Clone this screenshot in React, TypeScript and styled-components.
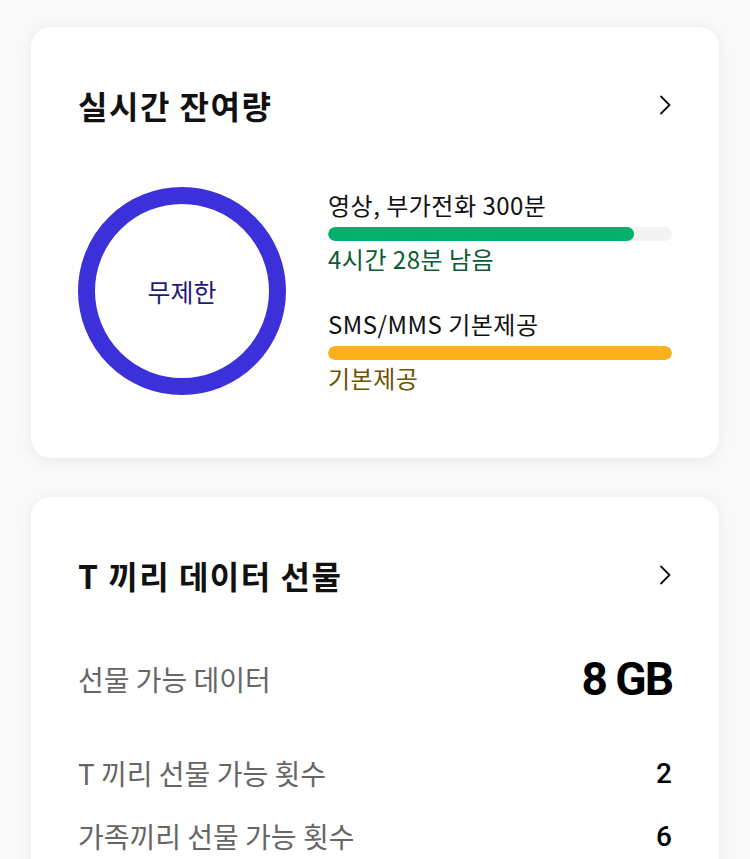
import styled, { createGlobalStyle } from 'styled-components';

const GlobalStyle = createGlobalStyle`
  html, body {
    margin: 0;
    padding: 0;
    background: #f9f9f9;
    font-family: 'Noto Sans CJK KR', 'Noto Sans', sans-serif;
  }
`;

const Chevron = () => (
  <svg width="24" height="24" viewBox="0 0 24 24" fill="none" stroke="#111" strokeWidth="1.8" strokeLinecap="round" strokeLinejoin="round">
    <path d="M7 3.5l8.5 8.5L7 20.5" />
  </svg>
);

const usage = [
  { label: '영상, 부가전화 300분', sub: '4시간 28분 남음', pct: 89, color: '#03b16a', subColor: '#0b5b33' },
  { label: 'SMS/MMS 기본제공', sub: '기본제공', pct: 100, color: '#fcb11c', subColor: '#6e5200' },
];

const gifts = [
  { label: 'T 끼리 선물 가능 횟수', value: '2' },
  { label: '가족끼리 선물 가능 횟수', value: '6' },
];

export default function App() {
  return (
    <>
      <GlobalStyle />
      <Page>
        <Card>
          <CardHeader>
            <CardTitle>실시간 잔여량</CardTitle>
            <Chevron />
          </CardHeader>
          <Remain>
            <Ring>무제한</Ring>
            <UsageList>
              {usage.map(u => (
                <UsageItem key={u.label}>
                  <UsageLabel>{u.label}</UsageLabel>
                  <Track>
                    <Fill $color={u.color} style={{ width: `${u.pct}%` }} />
                  </Track>
                  <UsageSub $color={u.subColor}>{u.sub}</UsageSub>
                </UsageItem>
              ))}
            </UsageList>
          </Remain>
        </Card>

        <Card>
          <CardHeader>
            <CardTitle>T 끼리 데이터 선물</CardTitle>
            <Chevron />
          </CardHeader>
          <BigRow>
            <RowLabel>선물 가능 데이터</RowLabel>
            <BigValue>8 GB</BigValue>
          </BigRow>
          <CountList>
            {gifts.map(g => (
              <CountRow key={g.label}>
                <RowLabel>{g.label}</RowLabel>
                <CountValue>{g.value}</CountValue>
              </CountRow>
            ))}
          </CountList>
        </Card>
      </Page>
    </>
  );
}

const Page = styled.div`
  display: flex;
  flex-direction: column;
  gap: 39px;
  padding: 27px 31px 40px;
`;

const Card = styled.div`
  background: #fff;
  border-radius: 20px;
  box-shadow: 0 2px 14px rgba(0, 0, 0, 0.07);
  padding: 57px 47px 63px;
`;

const CardHeader = styled.div`
  display: flex;
  align-items: center;
  justify-content: space-between;
  height: 42px;
  margin-right: -6px;
`;

const CardTitle = styled.h2`
  margin: 0;
  font-size: 32px;
  font-weight: 700;
  color: #111;
  letter-spacing: 1.5px;
  line-height: 42px;
`;

const Remain = styled.div`
  display: flex;
  align-items: center;
  gap: 42px;
  margin-top: 61px;
`;

const Ring = styled.div`
  flex-shrink: 0;
  width: 208px;
  height: 208px;
  box-sizing: border-box;
  border: 17px solid #3b30d9;
  border-radius: 50%;
  display: flex;
  align-items: center;
  justify-content: center;
  font-size: 25px;
  color: #1e1a78;
`;

const UsageList = styled.div`
  flex: 1;
  display: flex;
  flex-direction: column;
  gap: 35px;
`;

const UsageItem = styled.div`
  display: flex;
  flex-direction: column;
`;

const UsageLabel = styled.div`
  font-size: 24px;
  line-height: 30px;
  color: #111;
  letter-spacing: 0.5px;
`;

const Track = styled.div`
  margin-top: 7px;
  height: 14px;
  border-radius: 7px;
  background: #f3f3f3;
  overflow: hidden;
`;

const Fill = styled.div<{ $color: string }>`
  height: 100%;
  border-radius: 7px;
  background: ${({ $color }) => $color};
`;

const UsageSub = styled.div<{ $color: string }>`
  margin-top: 3px;
  font-size: 24px;
  line-height: 30px;
  letter-spacing: 0.5px;
  color: ${({ $color }) => $color};
`;

const BigRow = styled.div`
  display: flex;
  align-items: center;
  justify-content: space-between;
  margin-top: 55px;
  height: 56px;
`;

const RowLabel = styled.div`
  font-size: 28px;
  color: #666;
  line-height: 40px;
`;

const BigValue = styled.div`
  font-family: 'Roboto', 'Noto Sans', sans-serif;
  font-size: 46px;
  font-weight: 700;
  color: #000;
  letter-spacing: -2px;
`;

const CountList = styled.div`
  display: flex;
  flex-direction: column;
  gap: 23px;
  margin-top: 46px;
`;

const CountRow = styled.div`
  display: flex;
  align-items: center;
  justify-content: space-between;
`;

const CountValue = styled.div`
  font-family: 'Roboto', 'Noto Sans', sans-serif;
  font-size: 28px;
  font-weight: 500;
  color: #000;
`;
